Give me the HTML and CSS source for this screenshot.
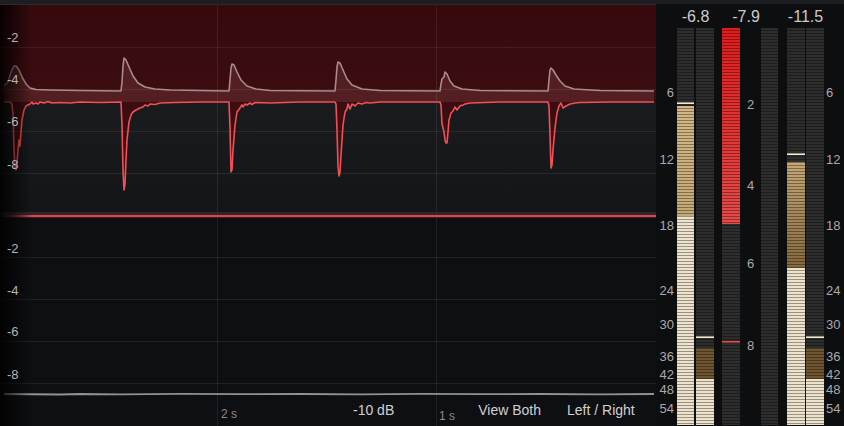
FILE: index.html
```html
<!DOCTYPE html>
<html lang="en">
<head>
    <meta charset="UTF-8">
    <title>Compressor Display</title>
    <link rel="stylesheet" href="styles.css">
</head>
<body>
    <div class="plugin">
        <div class="topbar"></div>
        <div class="main">
            <!-- Level / gain reduction history -->
            <div class="graph">
                <svg width="656" height="422" viewBox="0 4 656 422">
                    <defs>
                        <linearGradient id="redFill" x1="0" y1="0" x2="0" y2="1">
                            <stop offset="0" stop-color="#360a0d"/>
                            <stop offset="1" stop-color="#411013"/>
                        </linearGradient>
                        <linearGradient id="upperBg" x1="0" y1="0" x2="0" y2="1">
                            <stop offset="0" stop-color="#202124"/>
                            <stop offset="1" stop-color="#141518"/>
                        </linearGradient>
                        <linearGradient id="vignette" x1="0" y1="0" x2="1" y2="0">
                            <stop offset="0" stop-color="#000" stop-opacity="0.85"/>
                            <stop offset="1" stop-color="#000" stop-opacity="0"/>
                        </linearGradient>
                        <linearGradient id="redLine" x1="0" y1="0" x2="1" y2="0">
                            <stop offset="0" stop-color="#e2444b" stop-opacity="0.2"/>
                            <stop offset="0.05" stop-color="#e2444b"/>
                            <stop offset="1" stop-color="#e2444b"/>
                        </linearGradient>
                    </defs>

                    <!-- upper panel -->
                    <rect x="0" y="4" width="656" height="1" fill="#2a2b2e"/>
                    <rect x="0" y="5" width="656" height="208" fill="url(#upperBg)"/>
                    <path fill="url(#redFill)" d="M0,5 L656,5 L656,102 L654,102 L580,102.5 L570,104 L566,106 L563,108 L561,103 L559,106 L557,113 L555,128 L553,150 L552,165 L551,168 L550,135 L549,106 L548,102 L500,102 L470,103 L465,104 L460,106 L457,110 L455,107 L453,111 L451,113 L449,120 L448,132 L447,143 L446,143 L445,140 L444,132 L442,124 L441,105 L440,102 L370,102 L362,104 L358,103 L355,106 L352,104 L350,109 L348,104 L347,109 L345,112 L343,125 L341,155 L340,172 L339,176 L338,166 L337,130 L336,104 L335,102 L300,102 L255,102.5 L250,104 L247,104 L245,108 L243,106 L240,108 L237,112 L235,125 L233,150 L232,170 L231,172 L230,128 L229,102 L200,102 L175,102.5 L160,103 L150,104 L145,106 L140,108 L136,110 L133,112 L131,115 L129,122 L127,140 L126,160 L125,184 L124,190 L123,170 L122,125 L121,102 L80,102 L60,102.5 L40,102 L36,104 L33,103 L30,104 L28,105 L26,106 L24,110 L22,120 L21,132 L20,146 L19,140 L18,150 L17,163 L16,170 L15,168 L14,150 L13,115 L12,104 L10,102 L0,102 Z"/>
                    <polygon fill="#8a4a4c" fill-opacity="0.3" points="4,102 4,86 8,82 11,72 14,66 16,66 19,70 22,77 26,84 30,88 36,89.5 50,90 80,90.5 121,91 122,82 123,66 124,58 126,60 129,67 133,76 138,83 145,87 155,89 170,90 200,90.5 229,91 230,80 231,68 232,64 234,65 237,72 241,80 247,86 256,89 270,90.5 335,91 336,80 337,67 338,62 340,63 343,70 347,79 352,85 362,89 380,90.5 440,91 441,84 442,79 444,77 445,72 447,74 450,81 454,86 462,89 480,90.5 548,91 549,80 550,70 551,68 553,70 556,75 560,81 565,86 574,89 600,90.5 654,91 654,102"/>

                    <g class="grid">
                        <line x1="0" y1="47.5" x2="656" y2="47.5"/>
                        <line x1="0" y1="89.5" x2="656" y2="89.5"/>
                        <line x1="0" y1="131.5" x2="656" y2="131.5"/>
                        <line x1="0" y1="173.5" x2="656" y2="173.5"/>
                        <line x1="217.5" y1="5" x2="217.5" y2="212"/>
                        <line x1="436.5" y1="5" x2="436.5" y2="212"/>
                    </g>

                    <polyline class="input-line" points="4,86 8,82 11,72 14,66 16,66 19,70 22,77 26,84 30,88 36,89.5 50,90 80,90.5 121,91 122,82 123,66 124,58 126,60 129,67 133,76 138,83 145,87 155,89 170,90 200,90.5 229,91 230,80 231,68 232,64 234,65 237,72 241,80 247,86 256,89 270,90.5 335,91 336,80 337,67 338,62 340,63 343,70 347,79 352,85 362,89 380,90.5 440,91 441,84 442,79 444,77 445,72 447,74 450,81 454,86 462,89 480,90.5 548,91 549,80 550,70 551,68 553,70 556,75 560,81 565,86 574,89 600,90.5 654,91"/>
                    <polyline class="output-line" points="4,102 10,102 12,104 13,115 14,150 15,168 16,170 17,163 18,150 19,140 20,146 21,132 22,120 24,110 26,106 28,105 30,104 32,102 33,104 36,103 38,104 40,102 44,103 48,101.5 52,103 60,102.5 70,103 80,102 100,102.5 121,102 122,125 123,170 124,190 125,184 126,160 127,140 129,122 131,115 133,112 136,110 140,108 143,107 145,105 148,106 150,104 155,104.5 160,103 175,102.5 200,102 229,102 230,128 231,172 232,170 233,150 235,125 237,112 240,108 242,105 243,107 245,104 247,105 250,103 252,104.5 255,102.5 270,103 300,102 335,102 336,104 337,130 338,166 339,176 340,172 341,155 343,125 345,112 347,109 348,104 350,109 352,104 355,106 358,103 362,104 366,102.5 370,103 380,102 440,102 441,105 442,124 444,132 445,140 446,143 447,143 448,132 449,120 451,113 453,111 455,107 457,110 460,106 463,105 465,104 470,103 485,102.5 500,102 548,102 549,106 550,135 551,168 552,165 553,150 555,128 557,113 559,106 561,103 563,108 566,106 570,104 575,103 580,102.5 610,102 654,102"/>

                    <!-- divider -->
                    <rect x="0" y="212" width="656" height="3" fill="#2a2a2d"/>
                    <rect x="0" y="215" width="656" height="2.5" fill="url(#redLine)"/>

                    <!-- lower panel -->
                    <rect x="0" y="217.5" width="656" height="209" fill="#0e0f12"/>
                    <g class="grid">
                        <line x1="0" y1="257.5" x2="656" y2="257.5"/>
                        <line x1="0" y1="299.5" x2="656" y2="299.5"/>
                        <line x1="0" y1="341.5" x2="656" y2="341.5"/>
                        <line x1="0" y1="383.5" x2="656" y2="383.5"/>
                        <line x1="217.5" y1="218" x2="217.5" y2="426"/>
                        <line x1="436.5" y1="218" x2="436.5" y2="426"/>
                    </g>
                    <polyline class="level-line" points="4,394 60,394.5 80,394 120,394.3 180,393.8 240,394.2 300,394 360,394.4 420,393.9 480,394.2 540,394 600,394.3 654,394"/>

                    <rect x="0" y="5" width="32" height="421" fill="url(#vignette)"/>

                    <g class="axis">
                        <text x="7" y="42">-2</text>
                        <text x="7" y="84">-4</text>
                        <text x="7" y="126">-6</text>
                        <text x="7" y="169">-8</text>
                        <text x="7" y="253">-2</text>
                        <text x="7" y="295">-4</text>
                        <text x="7" y="336">-6</text>
                        <text x="7" y="379">-8</text>
                    </g>
                    <g class="time">
                        <text x="221" y="418">2 s</text>
                        <text x="439" y="420">1 s</text>
                    </g>
                </svg>

                <div class="graph-footer">
                    <span class="range">-10 dB</span>
                    <span class="view">View Both</span>
                    <span class="channels">Left / Right</span>
                </div>
            </div>

            <!-- Level meters -->
            <div class="meters">
                <div class="readout readout-in">-6.8</div>
                <div class="readout readout-gr">-7.9</div>
                <div class="readout readout-out">-11.5</div>

                <div class="scale scale-left">
                    <span style="top:58px">6</span>
                    <span style="top:125px">12</span>
                    <span style="top:191px">18</span>
                    <span style="top:256px">24</span>
                    <span style="top:290px">30</span>
                    <span style="top:322px">36</span>
                    <span style="top:340px">42</span>
                    <span style="top:355px">48</span>
                    <span style="top:374px">54</span>
                </div>

                <div class="bar bar-1">
                    <div class="seg off" style="height:74px"></div>
                    <div class="seg peak" style="height:2px"></div>
                    <div class="seg off" style="height:2px"></div>
                    <div class="seg tan" style="height:110px"></div>
                    <div class="seg cream" style="height:209px"></div>
                </div>
                <div class="bar bar-2">
                    <div class="seg off" style="height:308px"></div>
                    <div class="seg peak" style="height:2px"></div>
                    <div class="seg off" style="height:10px"></div>
                    <div class="seg brown" style="height:31px"></div>
                    <div class="seg cream" style="height:46px"></div>
                </div>
                <div class="bar bar-3">
                    <div class="seg red" style="height:196px"></div>
                    <div class="seg off" style="height:117px"></div>
                    <div class="seg red-peak" style="height:2px"></div>
                    <div class="seg off" style="height:82px"></div>
                </div>

                <div class="scale scale-mid">
                    <span style="top:70px">2</span>
                    <span style="top:151px">4</span>
                    <span style="top:229px">6</span>
                    <span style="top:311px">8</span>
                </div>

                <div class="bar bar-4">
                    <div class="seg off" style="height:397px"></div>
                </div>
                <div class="bar bar-5">
                    <div class="seg off" style="height:125px"></div>
                    <div class="seg peak" style="height:2px"></div>
                    <div class="seg off" style="height:7px"></div>
                    <div class="seg tan-dark" style="height:106px"></div>
                    <div class="seg cream" style="height:157px"></div>
                </div>
                <div class="bar bar-6">
                    <div class="seg off" style="height:308px"></div>
                    <div class="seg peak" style="height:2px"></div>
                    <div class="seg off" style="height:10px"></div>
                    <div class="seg brown" style="height:31px"></div>
                    <div class="seg cream" style="height:46px"></div>
                </div>

                <div class="scale scale-right">
                    <span style="top:58px">6</span>
                    <span style="top:125px">12</span>
                    <span style="top:191px">18</span>
                    <span style="top:256px">24</span>
                    <span style="top:290px">30</span>
                    <span style="top:322px">36</span>
                    <span style="top:340px">42</span>
                    <span style="top:355px">48</span>
                    <span style="top:374px">54</span>
                </div>
            </div>
        </div>
    </div>
</body>
</html>
```

FILE: styles.css
```css
/* Page */
body {
    margin: 0;
    background: #0d0e10;
    font-family: "Liberation Sans", Arial, sans-serif;
}

.plugin {
    width: 844px;
    height: 426px;
    display: flex;
    flex-direction: column;
    overflow: hidden;
}

.topbar {
    height: 4px;
    flex: none;
    background: #1d1e21;
}

.main {
    display: flex;
    height: 422px;
}

/* History graph */
.graph {
    position: relative;
    width: 656px;
    flex: none;
}

.graph svg {
    display: block;
}

.grid line {
    stroke: #ffffff;
    stroke-opacity: 0.08;
    stroke-width: 1;
}

.input-line {
    fill: none;
    stroke: #a88b8b;
    stroke-width: 1.6;
    stroke-linejoin: round;
}

.output-line {
    fill: none;
    stroke: #ef5156;
    stroke-width: 1.6;
    stroke-linejoin: round;
}

.level-line {
    fill: none;
    stroke: #929294;
    stroke-width: 1.8;
}

.axis text {
    fill: #b3b3b3;
    font-size: 13px;
    font-family: "Liberation Sans", Arial, sans-serif;
}

.time text {
    fill: #8a8a8c;
    font-size: 12px;
    font-family: "Liberation Sans", Arial, sans-serif;
}

/* Controls lying over the bottom of the graph */
.graph-footer {
    position: absolute;
    left: 353px;
    top: 397px;
    display: flex;
    color: #d0d0d0;
    font-size: 14px;
    line-height: 18px;
}

.graph-footer .view {
    margin-left: 84px;
}

.graph-footer .channels {
    margin-left: 26px;
}

/* Meters */
.meters {
    flex: 1;
    display: grid;
    grid-template-columns: 21px 17px 2px 18px 8px 18px 21px 17px 9px 18px 1px 18px 20px;
    grid-template-rows: 24px 397px;
    background: #0d0e10;
}

.readout {
    grid-row: 1;
    color: #cacaca;
    font-size: 16px;
    line-height: 26px;
    text-align: center;
    white-space: nowrap;
}

.readout-in {
    grid-column: 2 / 5;
}

.readout-gr {
    grid-column: 6 / 9;
    padding-right: 8px;
}

.readout-out {
    grid-column: 10 / 13;
}

.scale {
    grid-row: 2;
    position: relative;
    color: #a9a9a9;
    font-size: 13px;
}

.scale span {
    position: absolute;
    line-height: 14px;
}

.scale-left {
    grid-column: 1;
}

.scale-left span {
    right: 3px;
}

.scale-mid {
    grid-column: 7;
}

.scale-mid span {
    left: 0;
    right: 0;
    text-align: center;
}

.scale-right {
    grid-column: 13;
}

.scale-right span {
    left: 2px;
}

.bar {
    grid-row: 2;
    position: relative;
    display: flex;
    flex-direction: column;
}

.bar-1 { grid-column: 2; }
.bar-2 { grid-column: 4; }
.bar-3 { grid-column: 6; }
.bar-4 { grid-column: 8; }
.bar-5 { grid-column: 10; }
.bar-6 { grid-column: 12; }

/* LED stripes over the bar */
.bar::after {
    content: "";
    position: absolute;
    inset: 0;
    background: repeating-linear-gradient(to bottom, transparent 0 2px, rgba(0, 0, 0, 0.36) 2px 3px);
}

.seg {
    flex: none;
}

.off {
    background: #2d2d2e;
}

.peak {
    background: #f4ead0;
}

.tan {
    background: linear-gradient(#d3b785, #c6a874);
}

.tan-dark {
    background: linear-gradient(#c6a877, #84683b);
}

.brown {
    background: #6f5530;
}

.cream {
    background: #ede3cc;
}

.red {
    background: linear-gradient(#e01b1b, #e64a4a);
}

.red-peak {
    background: #f04848;
}
```
